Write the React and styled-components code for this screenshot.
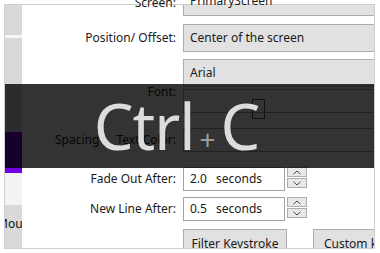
import React from "react";
import styled, { createGlobalStyle } from "styled-components";

const GlobalStyle = createGlobalStyle`
  html, body { margin: 0; padding: 0; background: #fff; }
  body {
    font-family: "Noto Sans", "Segoe UI", sans-serif;
    font-size: 12px;
    color: #1a1a1a;
  }
`;

const Frame = styled.div`
  position: relative;
  box-sizing: border-box;
  margin: 4px 0 0 4px;
  width: 371px;
  height: 245px;
  border: 1px solid #cfcfcf;
  display: flex;
  background: #fff;
`;

const Sidebar = styled.div`
  width: 17px;
  flex: none;
  display: flex;
  flex-direction: column;
  overflow: hidden;
`;

const SideBlock = styled.div`
  flex: ${(p) => (p.$h ? `0 0 ${p.$h}px` : "1 1 auto")};
  background: ${(p) => p.$bg};
  line-height: 16px;
  font-size: 12px;
  white-space: nowrap;
`;

const SideText = styled.div`
  margin: 11px 0 0 -8px;
  color: #111;
`;

const Content = styled.div`
  flex: 1;
  display: flex;
  flex-direction: column;
  padding-left: 33px;
  clip-path: inset(-12px 0 0 0);
  min-width: 0;
`;

const Row = styled.div`
  display: grid;
  grid-template-columns: 121px auto;
  column-gap: 7px;
  align-items: center;
  margin-top: ${(p) => p.$mt || 0}px;
  height: ${(p) => p.$h}px;
  line-height: 16px;
`;

const Label = styled.div`
  text-align: right;
  white-space: nowrap;
  align-self: ${(p) => (p.$top ? "start" : "center")};
  margin-top: ${(p) => p.$offset || 0}px;
  display: flex;
  justify-content: ${(p) => (p.$split ? "space-between" : "flex-end")};
`;

const Combo = styled.div`
  box-sizing: border-box;
  width: 200px;
  height: ${(p) => p.$h}px;
  background: #e1e1e1;
  border: 1px solid #adadad;
  border-top-width: ${(p) => (p.$openTop ? 0 : 1)}px;
  display: flex;
  align-items: ${(p) => (p.$openTop ? "flex-start" : "center")};
  padding-left: 6px;
  white-space: nowrap;
`;

const ComboText = styled.span`
  margin-top: ${(p) => p.$mt || 0}px;
`;

const TextBox = styled.div`
  box-sizing: border-box;
  width: ${(p) => p.$w}px;
  height: 24px;
  background: #fff;
  border: 1px solid #a3a3a3;
  display: flex;
  align-items: center;
  padding-left: 6px;
  white-space: nowrap;
`;

const Swatch = styled.div`
  width: 13px;
  height: 20px;
  box-sizing: border-box;
  border: 1px solid #555;
  margin: 9px 0 0 62px;
  align-self: flex-start;
`;

const Unit = styled.span`
  margin-left: 9px;
`;

const NumberGroup = styled.div`
  display: flex;
  align-items: flex-start;
  gap: 2px;
`;

const Spin = styled.div`
  display: flex;
  flex-direction: column;
  gap: 1px;
`;

const SpinButton = styled.div`
  box-sizing: border-box;
  width: 20px;
  height: 10px;
  background: #e8e8e8;
  border: 1px solid #adadad;
  display: flex;
  align-items: center;
  justify-content: center;
`;

const Separator = styled.div`
  margin-top: 8px;
  height: 1px;
  background: #b4b4b4;
`;

const ButtonRow = styled.div`
  display: flex;
  margin-top: 8px;
  margin-left: 128px;
  gap: 26px;
`;

const Button = styled.div`
  box-sizing: border-box;
  flex: none;
  width: ${(p) => p.$w}px;
  height: 28px;
  background: #e1e1e1;
  border: 1px solid #adadad;
  display: flex;
  align-items: center;
  justify-content: ${(p) => (p.$left ? "flex-start" : "center")};
  padding-left: ${(p) => (p.$left ? 10 : 0)}px;
  white-space: nowrap;
`;

const Overlay = styled.div`
  position: absolute;
  left: 0;
  right: 0;
  top: 79px;
  height: 84px;
  background: rgba(0, 0, 0, 0.8);
  display: flex;
  align-items: center;
  justify-content: center;
  padding-right: 26px;
  box-sizing: border-box;
`;

const Keys = styled.div`
  font-family: "Noto Sans", "Segoe UI", sans-serif;
  font-size: 63px;
  line-height: 1;
  color: #dcdcdc;
  display: flex;
  align-items: baseline;
  margin-top: -2px;
`;

const KeyName = styled.span`
  letter-spacing: -1px;
`;

const Plus = styled.span`
  font-size: 28px;
  color: #9a9a9a;
  margin: 0 5px 0 5px;
`;

const Chevron = ({ down }) => (
  <svg width="8" height="5" viewBox="0 0 8 5">
    <path
      d={down ? "M0.5 0.8 L4 4 L7.5 0.8" : "M0.5 4.2 L4 1 L7.5 4.2"}
      fill="none"
      stroke="#4a4a4a"
      strokeWidth="1"
    />
  </svg>
);

const NumberField = ({ value }) => (
  <NumberGroup>
    <TextBox $w={102}>
      {value}
      <Unit>seconds</Unit>
    </TextBox>
    <Spin>
      <SpinButton>
        <Chevron />
      </SpinButton>
      <SpinButton>
        <Chevron down />
      </SpinButton>
    </Spin>
  </NumberGroup>
);

export default function App() {
  return (
    <>
      <GlobalStyle />
      <Frame>
        <Sidebar>
          <SideBlock $h={30} $bg="#d9d9d9" />
          <SideBlock $h={3} $bg="#f6f6f6" />
          <SideBlock $h={94} $bg="#d9d9d9" />
          <SideBlock $h={41} $bg="#7400e6" />
          <SideBlock $h={32} $bg="#f3f3f3" />
          <SideBlock $bg="#d9d9d9">
            <SideText>Mouse</SideText>
          </SideBlock>
        </Sidebar>
        <Content>
          <Row $h={11}>
            <Label $top $offset={-10}>Screen:</Label>
            <Combo $h={11} $openTop>
              <ComboText $mt={-12}>PrimaryScreen</ComboText>
            </Combo>
          </Row>
          <Row $h={28} $mt={8}>
            <Label>Position/ Offset:</Label>
            <Combo $h={28}>Center of the screen</Combo>
          </Row>
          <Row $h={28} $mt={7}>
            <Label />
            <Combo $h={28}>Arial</Combo>
          </Row>
          <Row $h={24} $mt={2}>
            <Label $top $offset={-5}>Font:</Label>
            <TextBox $w={200}>
              <Swatch />
            </TextBox>
          </Row>
          <Row $h={24} $mt={15}>
            <Label $split>
              <span>Spacing</span>
              <span>Text Color:</span>
            </Label>
            <TextBox $w={200} />
          </Row>
          <Separator />
          <Row $h={24} $mt={7}>
            <Label>Fade Out After:</Label>
            <NumberField value="2.0" />
          </Row>
          <Row $h={24} $mt={6}>
            <Label>New Line After:</Label>
            <NumberField value="0.5" />
          </Row>
          <ButtonRow>
            <Button $w={104}>Filter Keystroke</Button>
            <Button $w={110} $left>Custom keys</Button>
          </ButtonRow>
        </Content>
        <Overlay>
          <Keys>
            <KeyName>Ctrl</KeyName>
            <Plus>+</Plus>
            <KeyName>C</KeyName>
          </Keys>
        </Overlay>
      </Frame>
    </>
  );
}
